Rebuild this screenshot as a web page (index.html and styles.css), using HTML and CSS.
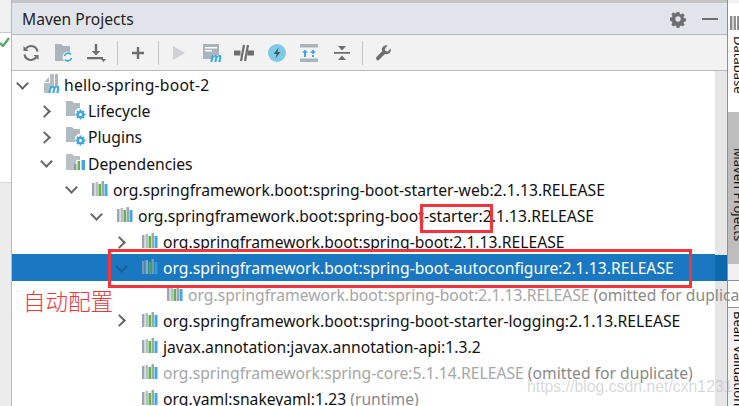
FILE: index.html
```html
<!DOCTYPE html>
<html lang="en">
<head>
<meta charset="utf-8">
<title>Maven Projects</title>
<link rel="stylesheet" href="styles.css">
</head>
<body>
<div class="app">
  <aside class="gutter">
    <div class="gutter-head"></div>
    <div class="gutter-white">
      <svg class="check" width="10" height="10" viewBox="0 0 10 10"><path d="M0 6l3 3 6-8" fill="none" stroke="#59a869" stroke-width="2.4"/></svg>
    </div>
    <div class="gutter-low"></div>
  </aside>
  <main class="panel">
    <div class="topline"></div>
    <header class="title">
      <span class="title-text">Maven Projects</span>
      <svg class="title-icon" width="18" height="18" viewBox="0 0 18 18"><path fill="#6e6e6e" fill-rule="evenodd" d="M7.400 1h3.200l.4 2.200 1.400.6 1.900-1.300 2.200 2.200-1.300 1.900.6 1.400 2.200.4v3.200l-2.200.4-.6 1.400 1.300 1.900-2.200 2.200-1.900-1.300-1.400.6-.4 2.200H7.400l-.4-2.200-1.400-.6-1.900 1.300-2.200-2.200 1.300-1.900-.6-1.400L0 10.600V7.400l2.200-.4.6-1.400-1.300-1.900 2.200-2.200 1.900 1.300 1.400-.6zM9 6a3 3 0 1 0 0 6 3 3 0 0 0 0-6z" transform="translate(1 1) scale(.89)"/></svg>
      <span class="title-min"></span>
    </header>
    <nav class="toolbar">
      <span class="slot"><svg width="18" height="18" viewBox="0 0 18 18"><path d="M15.500 7.500A6.500 6.500 0 0 0 4 4.500M2.500 10.500A6.500 6.500 0 0 0 14 13.500" fill="none" stroke="#6e6e6e" stroke-width="2.2"/><path d="M1.500 2v5h5zM16.500 16v-5h-5z" fill="#6e6e6e"/></svg></span>
      <span class="slot"><svg width="20" height="20" viewBox="0 0 20 20"><path d="M1 1h6l2 2h7v8l-6 7H1z" fill="#a9b4bc"/><circle cx="14" cy="14" r="5.500" fill="#f2f2f2"/><path d="M10.500 13a3.700 3.700 0 0 1 6.500-1.500M17.500 15a3.700 3.700 0 0 1-6.500 1.500" fill="none" stroke="#3da7e0" stroke-width="1.6"/></svg></span>
      <span class="slot"><svg width="20" height="20" viewBox="0 0 20 20"><path d="M8.800 1h2.400v7h3L10 12.500 5.800 8h3zM1 14h16v2.200H1z" fill="#6e6e6e"/><path d="M15 16h5l-2.500 3z" fill="#6e6e6e"/></svg></span>
      <span class="sep"></span>
      <span class="slot"><svg width="14" height="14" viewBox="0 0 14 14"><path d="M5.800 1h2.400v4.800H13v2.400H8.200V13H5.800V8.200H1V5.800h4.800z" fill="#6e6e6e"/></svg></span>
      <span class="sep"></span>
      <span class="slot"><svg width="14" height="16" viewBox="0 0 14 16"><path d="M1 1l12 7-12 7z" fill="#cfd2d4"/></svg></span>
      <span class="slot"><svg width="20" height="20" viewBox="0 0 20 20"><path d="M1 1h16v11h-7v4H1z" fill="#a9b4bc"/><path d="M3 4h12v1.500H3zM3 7h7v1.500H3z" fill="#fff"/><text class="m-glyph" x="8" y="19">m</text></svg></span>
      <span class="slot"><svg width="20" height="18" viewBox="0 0 20 18"><path d="M0 6.500h6.500v5H0zM13.500 6.500H20v5h-6.500z" fill="#6e6e6e"/><path d="M10 1L7 17M14 1l-3 16" stroke="#6e6e6e" stroke-width="2.2"/></svg></span>
      <span class="slot"><svg width="18" height="18" viewBox="0 0 18 18"><circle cx="9" cy="9" r="9" fill="#7dcae6"/><path d="M10.500 3.500L5.800 10h3l-1.500 4.500L12.500 8h-3z" fill="#45585f"/></svg></span>
      <span class="slot"><svg width="18" height="18" viewBox="0 0 18 18"><path d="M0 0h18v3.500H0zM0 14.500h18V18H0z" fill="#a9b4bc"/><path d="M5 5.500l-3 3.200h2V13h2V8.700h2zM13 5.500l-3 3.200h2v1h2v-1h2zM12 11h2v2h-2z" fill="#3da7e0"/></svg></span>
      <span class="slot"><svg width="16" height="16" viewBox="0 0 16 16"><path d="M0 7h16v1.800H0zM4 1h8L8 5.500zM8 10.500l4 4.500H4z" fill="#6e6e6e"/></svg></span>
      <span class="sep"></span>
      <span class="slot"><svg width="18" height="18" viewBox="0 0 18 18"><path d="M2.200 13.300l6-6c-.8-2.300 0-4.300 1.600-5.300 1.100-.7 2.700-.9 3.900-.4l-2.800 2.800.5 2.500 2.500.5 2.800-2.800c.5 1.400.2 2.900-.7 4-1.200 1.500-3 2.100-5.100 1.400l-6 6c-.6.6-1.600.5-2.200-.1-.6-.6-.6-1.500-.5-2.600z" fill="#6e6e6e"/></svg></span>
    </nav>
    <section class="tree-wrap">
      <ul class="tree">
        <li class="row d0"><span class="arrow down"></span><svg class="ico" width="18" height="20" viewBox="0 0 18 20"><path d="M0 8l5-5v5zM6 0h4v13H5v6H0V9h6z" fill="#b5bcc2"/><path d="M11 0h3v13h-3z" fill="#a9b4bc"/><text class="m-glyph" x="4" y="19">m</text></svg><span class="label">hello-spring-boot-2</span></li>
        <li class="row d1"><span class="arrow right"></span><svg class="ico" width="20" height="20" viewBox="0 0 20 20"><use href="#folder-gear"/></svg><span class="label">Lifecycle</span></li>
        <li class="row d1"><span class="arrow right"></span><svg class="ico" width="20" height="20" viewBox="0 0 20 20"><use href="#folder-gear"/></svg><span class="label">Plugins</span></li>
        <li class="row d1"><span class="arrow down"></span><svg class="ico" width="20" height="20" viewBox="0 0 20 20"><path d="M0 1h6l2 2h6v4h-4v10H0z" fill="#b9c1c7"/><path d="M8 11h2.500v6H8z" fill="#8b979f"/><path d="M11.500 8H14v9h-2.500z" fill="#62b543"/><path d="M15.500 7H19v10h-3.500z" fill="#40a9e0"/></svg><span class="label">Dependencies</span></li>
        <li class="row d2"><span class="arrow down"></span><svg class="bars" width="16" height="16"><use href="#bars"/></svg><span class="label">org.springframework.boot:spring-boot-starter-web:2.1.13.RELEASE</span></li>
        <li class="row d3"><span class="arrow down"></span><svg class="bars" width="16" height="16"><use href="#bars"/></svg><span class="label">org.springframework.boot:spring-boot-starter:2.1.13.RELEASE</span></li>
        <li class="row d4"><span class="arrow right"></span><svg class="bars" width="16" height="16"><use href="#bars"/></svg><span class="label">org.springframework.boot:spring-boot:2.1.13.RELEASE</span></li>
        <li class="row d4 selected"><span class="arrow down"></span><svg class="bars" width="16" height="16"><use href="#bars"/></svg><span class="label">org.springframework.boot:spring-boot-autoconfigure:2.1.13.RELEASE</span></li>
        <li class="row d5 dim"><span class="arrow none"></span><svg class="bars" width="16" height="16"><use href="#bars"/></svg><span class="label">org.springframework.boot:spring-boot:2.1.13.RELEASE <span class="note">(omitted for duplicate)</span></span></li>
        <li class="row d4"><span class="arrow right"></span><svg class="bars" width="16" height="16"><use href="#bars"/></svg><span class="label">org.springframework.boot:spring-boot-starter-logging:2.1.13.RELEASE</span></li>
        <li class="row d4"><span class="arrow none"></span><svg class="bars" width="16" height="16"><use href="#bars"/></svg><span class="label">javax.annotation:javax.annotation-api:1.3.2</span></li>
        <li class="row d4 dim"><span class="arrow none"></span><svg class="bars" width="16" height="16"><use href="#bars"/></svg><span class="label">org.springframework:spring-core:5.1.14.RELEASE <span class="note">(omitted for duplicate)</span></span></li>
        <li class="row d4"><span class="arrow none"></span><svg class="bars" width="16" height="16"><use href="#bars"/></svg><span class="label">org.yaml:snakeyaml:1.23 <span class="note">(runtime)</span></span></li>
      </ul>
      <div class="scrollbar"><div class="scroll-sel"></div></div>
    </section>
  </main>
  <aside class="tabs">
    <div class="tab tab-db">
      <svg width="10" height="16" viewBox="0 0 10 16"><path d="M0 1h10v14H0z" fill="#8a8a8a"/><path d="M3 1v14M6.500 1v14" stroke="#fff" stroke-width="1.2"/></svg>
      <span class="tab-text">Database</span>
    </div>
    <div class="tab tab-maven"><span class="tab-text">Maven Projects</span></div>
    <div class="tab tab-gap"></div>
    <div class="tab tab-blank"></div>
    <div class="tab tab-bean"><span class="tab-text">Bean Validation</span></div>
  </aside>

  <div class="mark mark-small"></div>
  <div class="mark mark-big"></div>
  <div class="callout">自动配置</div>
  <div class="watermark">https://blog.csdn.net/cxh1231</div>
</div>
<svg class="defs" width="0" height="0">
  <defs>
    <g id="bars">
      <rect x="0" y="2" width="2.500" height="13" fill="#9aa7b0"/>
      <rect x="3.500" y="1" width="2.500" height="14" fill="#b4bec5"/>
      <rect x="6.500" y="3" width="2.500" height="12" fill="#62b543"/>
      <rect x="9.500" y="0" width="2.500" height="15" fill="#9aa7b0"/>
      <rect x="12.500" y="3" width="3" height="12" fill="#40a9e0"/>
    </g>
    <g id="folder-gear">
      <path d="M0 1h6l2 2h6v5h-2l-3 3v5H0z" fill="#b0bac1"/>
      <path d="M14.500 9.500v10M9.500 14.500h10M11 11l7 7M18 11l-7 7" stroke="#3da7e0" stroke-width="1.8"/>
      <circle cx="14.500" cy="14.500" r="3.800" fill="#3da7e0"/>
      <circle cx="14.500" cy="14.500" r="1.500" fill="#fff"/>
    </g>
  </defs>
</svg>
</body>
</html>
```
FILE: styles.css
```css
* { box-sizing: border-box; }
html, body { margin: 0; padding: 0; background: #fff; }
body { width: 739px; height: 406px; overflow: hidden; }
ul { list-style: none; margin: 0; padding: 0; }
.defs { display: block; height: 0; }
.app {
  position: relative;
  display: flex;
  width: 739px;
  height: 406px;
  overflow: hidden;
  font-family: "Noto Sans", "Open Sans", sans-serif;
  font-size: 15.7px;
  color: #111;
}
.gutter { width: 12px; flex: none; display: flex; flex-direction: column; border-right: 1px solid #b8b8b8; }
.gutter-head { height: 33px; background: #f0f0f0; border-bottom: 1px solid #c8c8c8; }
.gutter-white { height: 149px; background: #fff; padding-top: 4px; }
.check { display: block; }
.gutter-low { flex: 1; background: #ececec; border-top: 1px solid #d8d8d8; }

.panel { flex: 1; min-width: 0; display: flex; flex-direction: column; }
.topline { height: 3px; background: #c4c4c4; flex: none; }
.title {
  height: 32px; flex: none; display: flex; align-items: center;
  padding: 0 9px 0 10px;
  background: #e1e5eb;
  border-bottom: 1px solid #b9b9b9;
}
.title-text { flex: 1; font-size: 15.6px; color: #222; }
.title-icon { margin-right: 15px; }
.title-min { width: 16px; height: 2px; background: #6e6e6e; margin-right: 0; }
.toolbar {
  height: 36px; flex: none; display: flex; align-items: center;
  padding-left: 3px;
  background: #f2f2f2;
  border-bottom: 1px solid #b9b9b9;
}
.slot { width: 32.5px; flex: none; display: flex; justify-content: center; align-items: center; }
.sep { width: 1px; height: 24px; margin: 0 4px; background: #c4c4c4; flex: none; }
.m-glyph { font: italic 700 13px "Noto Sans", sans-serif; fill: #2fa5e0; }

.tree-wrap { flex: 1; min-height: 0; display: flex; }
.tree { flex: 1; min-width: 0; }
.scrollbar { width: 12px; flex: none; background: #e6e6e6; padding-top: 184px; }
.scroll-sel { height: 26px; background: #0d69ad; }
.row { position: relative; z-index: 1; height: 26.2px; display: flex; align-items: center; white-space: nowrap; }
.d0 { padding-left: 5px; }
.d1 { padding-left: 29px; }
.d2 { padding-left: 54px; }
.d3 { padding-left: 79px; }
.d4 { padding-left: 104px; }
.d5 { padding-left: 129px; }
.arrow { width: 9px; height: 9px; flex: none; margin-right: 17px; }
.d0 .arrow { margin-right: 18px; }
.d1 .arrow { margin-right: 16px; }
.arrow::before {
  content: ""; display: block; width: 7px; height: 7px;
  border-right: 2px solid #666; border-bottom: 2px solid #666;
}
.arrow.down::before { transform: translate(1px, -1px) rotate(45deg); }
.arrow.right::before { transform: translate(-1px, 1px) rotate(-45deg); }
.arrow.none::before { display: none; }
.ico { flex: none; margin-right: 2px; }
.bars { flex: none; margin-right: 5px; }
.label { flex: none; padding-top: 2px; }
.d0 .label { letter-spacing: .2px; }
.dim .label { color: #a6a6a6; }
.note { color: #8a8a8a; }
.selected { background: #1a78c2; }
.selected .label { color: #fff; }
.selected .arrow::before { border-color: #1d5f93; }
.selected .bars { opacity: .7; }

.tabs { width: 12px; flex: none; display: flex; flex-direction: column; border-left: 1px solid #8f8f8f; background: #f2f2f2; overflow: hidden; }
.tab { display: flex; flex-direction: column; align-items: flex-start; padding-left: 2px; flex: none; }
.tab-db { height: 109px; padding-top: 12px; background: #fff; margin-top: 3px; gap: 5px; }
.tab-maven { height: 152px; background: #bdbdbd; padding-top: 36px; }
.tab-gap { height: 17px; background: #f0f0f0; border-bottom: 1px solid #8f8f8f; }
.tab-blank { height: 27px; background: #fff; border-bottom: 1px solid #8f8f8f; }
.tab-bean { flex: 1; padding-top: 3px; }
.tab-text { writing-mode: vertical-rl; font-size: 13px; color: #111; white-space: nowrap; }

.mark { position: absolute; z-index: 2; border: 3px solid #f4333a; }
.mark-small { left: 420px; top: 204px; width: 73px; height: 29px; }
.mark-big { left: 108px; top: 249px; width: 584px; height: 39px; }
.callout {
  position: absolute; z-index: 2; left: 23px; top: 285px;
  font-family: "Noto Sans CJK SC", sans-serif;
  font-size: 22.5px; line-height: 30px; color: #f4333a; font-weight: 300;
}
.watermark {
  position: absolute; z-index: 2; left: 527px; top: 378px;
  font-family: "Liberation Sans", sans-serif;
  font-size: 15.8px; color: rgba(185,185,185,.55);
}
```
